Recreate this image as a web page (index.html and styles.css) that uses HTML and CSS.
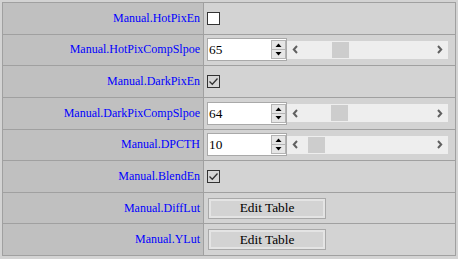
FILE: index.html
```html
<!DOCTYPE html>
<html>
<head>
<meta charset="utf-8">
<link rel="stylesheet" href="styles.css">
</head>
<body>
<div class="grid">
  <div class="cell label">Manual.HotPixEn</div>
  <div class="cell value"><span class="check"></span></div>

  <div class="cell label">Manual.HotPixCompSlpoe</div>
  <div class="cell value">
    <div class="spin"><span class="num">65</span>
      <span class="spinbtns"><span class="sb"><svg width="7" height="4" viewBox="0 0 7 4"><polygon points="0.5,4 3.5,0.5 6.5,4" fill="#000"/></svg></span><span class="sb"><svg width="7" height="4" viewBox="0 0 7 4"><polygon points="0.5,0 3.5,3.5 6.5,0" fill="#000"/></svg></span></span>
    </div>
    <div class="scroll">
      <span class="arr"><svg width="7" height="9" viewBox="0 0 7 9"><polyline points="5,1 1.8,4.5 5,8" fill="none" stroke="#606060" stroke-width="2"/></svg></span>
      <span class="track"><span class="thumb" style="margin-left:28px"></span></span>
      <span class="arr"><svg width="7" height="9" viewBox="0 0 7 9"><polyline points="2,1 5.2,4.5 2,8" fill="none" stroke="#606060" stroke-width="2"/></svg></span>
    </div>
  </div>

  <div class="cell label">Manual.DarkPixEn</div>
  <div class="cell value"><span class="check checked"><svg width="11" height="11" viewBox="0 0 11 11"><polyline points="1.5,5.5 4.3,8.3 9.5,2.5" fill="none" stroke="#333" stroke-width="1.3"/></svg></span></div>

  <div class="cell label">Manual.DarkPixCompSlpoe</div>
  <div class="cell value">
    <div class="spin"><span class="num">64</span>
      <span class="spinbtns"><span class="sb"><svg width="7" height="4" viewBox="0 0 7 4"><polygon points="0.5,4 3.5,0.5 6.5,4" fill="#000"/></svg></span><span class="sb"><svg width="7" height="4" viewBox="0 0 7 4"><polygon points="0.5,0 3.5,3.5 6.5,0" fill="#000"/></svg></span></span>
    </div>
    <div class="scroll">
      <span class="arr"><svg width="7" height="9" viewBox="0 0 7 9"><polyline points="5,1 1.8,4.5 5,8" fill="none" stroke="#606060" stroke-width="2"/></svg></span>
      <span class="track"><span class="thumb" style="margin-left:27px"></span></span>
      <span class="arr"><svg width="7" height="9" viewBox="0 0 7 9"><polyline points="2,1 5.2,4.5 2,8" fill="none" stroke="#606060" stroke-width="2"/></svg></span>
    </div>
  </div>

  <div class="cell label">Manual.DPCTH</div>
  <div class="cell value">
    <div class="spin"><span class="num">10</span>
      <span class="spinbtns"><span class="sb"><svg width="7" height="4" viewBox="0 0 7 4"><polygon points="0.5,4 3.5,0.5 6.5,4" fill="#000"/></svg></span><span class="sb"><svg width="7" height="4" viewBox="0 0 7 4"><polygon points="0.5,0 3.5,3.5 6.5,0" fill="#000"/></svg></span></span>
    </div>
    <div class="scroll">
      <span class="arr"><svg width="7" height="9" viewBox="0 0 7 9"><polyline points="5,1 1.8,4.5 5,8" fill="none" stroke="#606060" stroke-width="2"/></svg></span>
      <span class="track"><span class="thumb" style="margin-left:4px"></span></span>
      <span class="arr"><svg width="7" height="9" viewBox="0 0 7 9"><polyline points="2,1 5.2,4.5 2,8" fill="none" stroke="#606060" stroke-width="2"/></svg></span>
    </div>
  </div>

  <div class="cell label">Manual.BlendEn</div>
  <div class="cell value"><span class="check checked"><svg width="11" height="11" viewBox="0 0 11 11"><polyline points="1.5,5.5 4.3,8.3 9.5,2.5" fill="none" stroke="#333" stroke-width="1.3"/></svg></span></div>

  <div class="cell label">Manual.DiffLut</div>
  <div class="cell value"><button class="btn">Edit Table</button></div>

  <div class="cell label">Manual.YLut</div>
  <div class="cell value"><button class="btn">Edit Table</button></div>
</div>
</body>
</html>
```
FILE: styles.css
```css
html, body {
  margin: 0;
  padding: 0;
}
body {
  padding: 2px;
  background: #d3d3d3;
  font-family: "Liberation Serif", "Times New Roman", serif;
}
.grid {
  display: grid;
  grid-template-columns: 201px 252px;
  grid-template-rows: repeat(8, 1fr);
  width: 454px;
  height: 254px;
  box-sizing: border-box;
  border-top: 1px solid #a0a0a0;
  border-left: 1px solid #a0a0a0;
}
.cell {
  display: flex;
  align-items: center;
  border-right: 1px solid #a0a0a0;
  border-bottom: 1px solid #a0a0a0;
  min-height: 0;
}
.label {
  background: #c0c0c0;
  justify-content: flex-end;
  padding-right: 3px;
  color: #0000ff;
  font-size: 12px;
}
.value {
  background: #d3d3d3;
  padding-left: 3px;
}
.check {
  width: 13px;
  height: 13px;
  box-sizing: border-box;
  border: 1px solid #333;
  background: #fff;
  display: flex;
  align-items: center;
  justify-content: center;
}
.check.checked {
  background: #d6d6d6;
}
.spin {
  width: 80px;
  height: 23px;
  box-sizing: border-box;
  border: 1px solid #a9a9a9;
  background: #fff;
  display: flex;
  align-items: center;
  justify-content: space-between;
  padding-left: 1px;
}
.num {
  font-size: 13.33px;
  color: #000;
  line-height: 1;
}
.spinbtns {
  display: flex;
  flex-direction: column;
  width: 15px;
  height: 19px;
  box-sizing: border-box;
  margin-right: 0;
}
.sb {
  flex: 1;
  display: flex;
  align-items: center;
  justify-content: center;
  border: 1px solid #b4b4b4;
  background: #e6e6e6;
}
.sb + .sb {
  border-top: none;
}
.scroll {
  width: 161px;
  height: 18px;
  background: #eeeeee;
  display: flex;
  align-items: center;
}
.arr {
  width: 17px;
  height: 18px;
  display: flex;
  align-items: center;
  justify-content: center;
}
.track {
  flex: 1;
  height: 16px;
  display: flex;
}
.thumb {
  width: 17px;
  height: 16px;
  background: #cdcdcd;
}
.btn {
  width: 118px;
  height: 21px;
  margin-left: 1px;
  padding: 0;
  box-sizing: border-box;
  border: 1px solid #a9a9a9;
  box-shadow: inset 0 0 0 2px #e4e4e4;
  background: #d3d3d3;
  font-family: "Liberation Serif", "Times New Roman", serif;
  font-size: 13.33px;
  color: #000;
}
```
